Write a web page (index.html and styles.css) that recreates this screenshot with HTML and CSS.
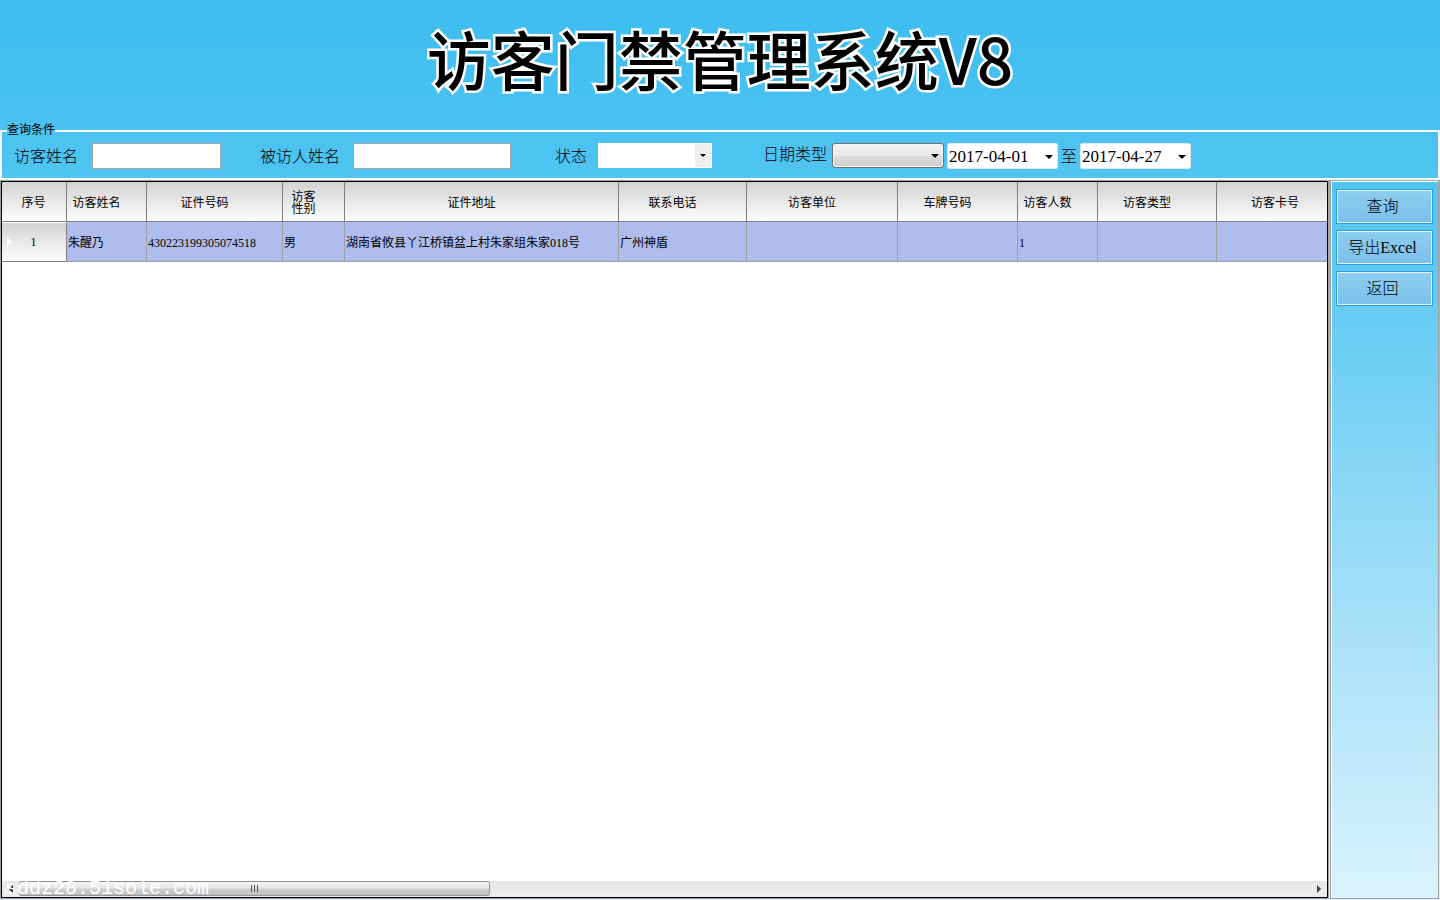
FILE: index.html
```html
<!DOCTYPE html>
<html lang="zh-CN">
<head>
<meta charset="utf-8">
<title>访客门禁管理系统V8</title>
<link rel="stylesheet" href="styles.css">
</head>
<body>
<header class="banner"><h1 class="title">访客门禁管理系统V8</h1></header>
<form class="query">
  <fieldset class="conditions">
    <legend>查询条件</legend>
    <div class="fields">
      <div class="field visitor">
        <label for="visitor">访客姓名</label>
        <input class="text" id="visitor" type="text">
      </div>
      <div class="field host">
        <label for="host">被访人姓名</label>
        <input class="text" id="host" type="text">
      </div>
      <div class="field state">
        <label for="state">状态</label>
        <span class="combo flat"><select id="state"><option></option></select></span>
      </div>
      <div class="field dates">
        <label class="raised" for="datetype">日期类型</label>
        <span class="combo"><select id="datetype"><option></option></select></span>
        <span class="picker"><input id="from" type="text" value="2017-04-01" aria-label="开始日期"><button type="button" aria-label="选择开始日期"></button></span>
        <label class="to" for="until">至</label>
        <span class="picker"><input id="until" type="text" value="2017-04-27"><button type="button" aria-label="选择结束日期"></button></span>
      </div>
    </div>
  </fieldset>
</form>
<main class="content">
  <section class="grid">
    <div class="rows">
      <table>
        <colgroup>
          <col class="w-index"><col class="w-small"><col class="w-id"><col class="w-sex"><col class="w-address"><col class="w-phone"><col class="w-company"><col class="w-medium"><col class="w-small"><col class="w-type"><col class="w-card">
        </colgroup>
        <thead>
          <tr><th class="index">序号</th><th>访客姓名</th><th>证件号码</th><th>访客<br>性别</th><th>证件地址</th><th>联系电话</th><th>访客单位</th><th>车牌号码</th><th>访客人数</th><th>访客类型</th><th>访客卡号</th></tr>
        </thead>
        <tbody>
          <tr><th class="index current" scope="row">1</th><td>朱醒乃</td><td>430223199305074518</td><td>男</td><td>湖南省攸县丫江桥镇盆上村朱家组朱家018号</td><td>广州神盾</td><td></td><td></td><td>1</td><td></td><td></td></tr>
        </tbody>
      </table>
    </div>
    <div class="scrollbar">
      <button class="arrow left" type="button" aria-label="向左滚动"></button>
      <div class="track"><div class="thumb"><svg width="9" height="7" viewBox="0 0 9 7"><path d="M1.5 0v7M4.5 0v7M7.5 0v7" stroke="#555"/></svg></div></div>
      <button class="arrow right" type="button" aria-label="向右滚动"></button>
      <span class="watermark">sddz28.51sole.com</span>
    </div>
  </section>
  <aside class="actions">
    <button type="button">查询</button>
    <button type="button">导出Excel</button>
    <button type="button">返回</button>
  </aside>
</main>
</body>
</html>
```
FILE: styles.css
```css
* { box-sizing: border-box; }
body {
  margin: 0;
  min-height: 100vh;
  padding-bottom: 1px;
  display: flex;
  flex-direction: column;
  color: #000;
  font: 16px/20px "Liberation Serif", "Noto Sans CJK SC", sans-serif;
  font-weight: 300;
  background: linear-gradient(#3dbdf0 0%, #50c4f1 20%, #68cdf4 36%, #a4dff8 68%, #daf3fd 100%);
}
input, select, button { font: inherit; color: inherit; margin: 0; }

.banner { height: 122px; padding-bottom: 8px; display: flex; align-items: center; justify-content: center; }
.title {
  margin: 0;
  font: 500 64px/112px "Noto Sans CJK SC", sans-serif;
  -webkit-text-stroke: 5px #fff;
  stroke-linejoin: round;
  paint-order: stroke fill;
}

.conditions {
  margin: 0;
  min-width: 0;
  padding: 4px 12px 9px;
  border: 2px solid #f4fbfe;
}
.conditions legend {
  margin-left: -7px;
  padding: 1px 0 2px;
  font-size: 12px;
  line-height: 14px;
  font-weight: 400;
}
.fields { display: flex; align-items: center; white-space: nowrap; }
.field { display: flex; align-items: center; height: 26px; }
.field label { padding-top: 2px; }
.visitor { gap: 14px; margin-right: 39px; }
.host { gap: 13px; margin-right: 44px; }
.state { gap: 11px; margin-right: 51px; }
.text { height: 26px; border: 1px solid #a5a9ae; background: #fff; padding: 0 4px; }
.visitor .text { width: 129px; }
.host .text { width: 158px; }
.dates { gap: 3px; }
.dates .raised { padding: 0 2px 2px 0; }

.combo { position: relative; width: 112px; height: 25px; align-self: flex-start; }
.combo select {
  appearance: none;
  display: block;
  width: 100%;
  height: 100%;
  border: 1px solid #707070;
  border-radius: 3px;
  background: linear-gradient(#f2f2f2, #ebebeb 48%, #dddddd 52%, #cfcfcf);
  box-shadow: inset 0 0 0 1px #f8f8f8;
}
.combo::after, .picker button::after {
  content: "";
  border: 4px solid transparent;
  border-top-color: #000;
  border-bottom: 0;
}
.combo::after { position: absolute; right: 5px; top: 11px; pointer-events: none; }
.combo.flat { width: 114px; }
.combo.flat select {
  border: 1px solid #fff;
  border-radius: 0;
  box-shadow: none;
  background: linear-gradient(90deg, #fff calc(100% - 16px), #efefef calc(100% - 16px));
}
.flat::after { border-width: 3px 3px 0; right: 6px; }
.picker {
  display: flex;
  width: 111px;
  height: 26px;
  background: #fff;
  border: 1px solid #dbe5ec;
  border-radius: 2px;
}
.picker input { flex: 1; min-width: 0; border: 0; padding: 2px 0 0 1px; background: none; font-size: 17px; }
.picker button { width: 16px; padding: 2px 0 0; border: 0; background: none; display: flex; align-items: center; justify-content: center; }

.content { flex: 1; display: grid; grid-template-columns: minmax(0, 1fr) 109px; gap: 2px; padding-right: 1px; }
.grid {
  display: flex;
  flex-direction: column;
  min-width: 0;
  background: #fff;
  border: 1px solid #000;
  outline: 1px solid #a0a0a0;
  margin: 1px 0 1px 1px;
}
.rows { flex: 1; overflow: hidden; }
table { table-layout: fixed; width: 1352px; border-spacing: 0; font-size: 12px; line-height: 12px; font-weight: 400; }
.w-index { width: 65px; }
.w-small { width: 80px; }
.w-id { width: 136px; }
.w-sex { width: 62px; }
.w-address { width: 274px; }
.w-phone { width: 128px; }
.w-company { width: 151px; }
.w-medium { width: 120px; }
.w-type { width: 119px; }
.w-card { width: 137px; }
th, td { height: 40px; border: solid #808080; border-width: 0 1px 1px 0; white-space: nowrap; font-weight: inherit; }
th { padding: 2px 20px 0 0; background: linear-gradient(#d3d3d3, #fdfdfd); }
th.index { padding: 2px 1px 0 0; }
td { padding: 2px 1px 0; background: #aebdee; border-color: #a0a0a0; }
th.current { position: relative; padding-top: 0; border-top: 1px solid #fff; }
.current::before {
  content: "";
  position: absolute;
  left: 5px;
  top: 14px;
  border: 5px solid transparent;
  border-left-color: #fff;
  border-right: 0;
}

.scrollbar { position: relative; display: flex; height: 16px; background: linear-gradient(#e6e6e6, #eee); }
.arrow { width: 17px; border: 0; padding: 0; background: none; display: flex; align-items: center; justify-content: center; }
.arrow::after { content: ""; border: 4px solid transparent; }
.left::after { border-right-color: #222; border-left: 0; }
.right::after { border-left-color: #444; border-right: 0; }
.track { flex: 1; display: flex; }
.thumb {
  width: 36.5%;
  height: 15px;
  border: 1px solid #949494;
  border-radius: 2px;
  background: linear-gradient(#f3f3f3, #e6e6e6 48%, #cfcfd1 52%, #bfbfc2);
  display: flex;
  align-items: center;
  justify-content: center;
}
.watermark {
  position: absolute;
  left: 3px;
  bottom: -2px;
  font: 20px/20px "Liberation Mono", monospace;
  color: #fff;
  pointer-events: none;
}

.actions {
  border: 1px solid #a0a0a0;
  box-shadow: inset 1px 1px #fff;
  padding: 8px 5px;
  display: flex;
  flex-direction: column;
  gap: 6px;
}
.actions button {
  height: 35px;
  padding: 0 4px 0 0;
  border: 1px solid #2d9de0;
  box-shadow: inset 0 0 0 1px #e4f4fd;
  background: linear-gradient(#8dcef0, #7bc1ea);
}
```
